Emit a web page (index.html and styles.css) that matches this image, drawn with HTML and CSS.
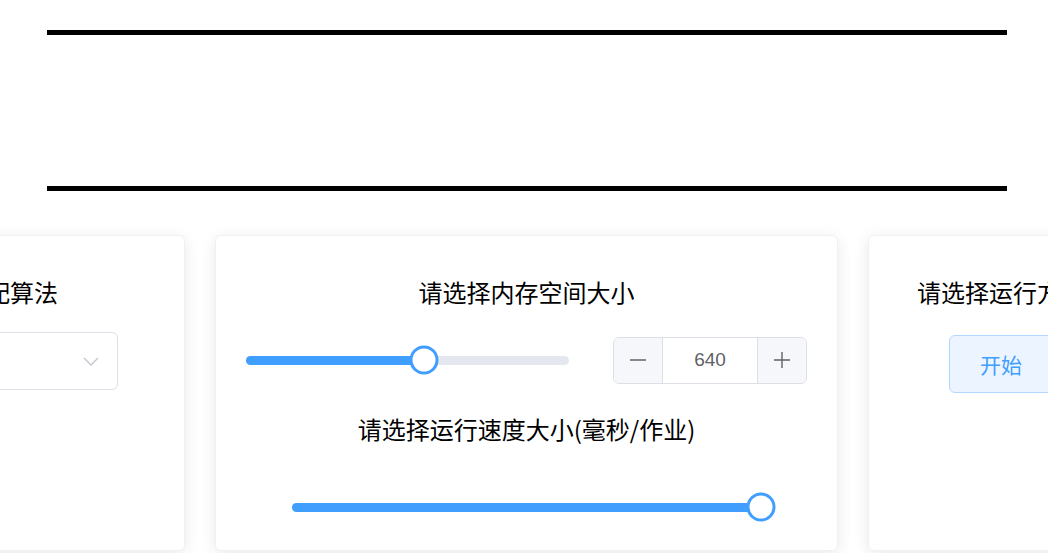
FILE: index.html
```html
<!DOCTYPE html>
<html lang="zh-CN">
<head>
<meta charset="utf-8">
<title>内存分配</title>
<link rel="stylesheet" href="styles.css">
</head>
<body>
<div class="page">
  <div class="canvas-box"></div>
  <div class="cards">
    <section class="card card-algo">
      <h2 class="card-title">请选择内存分配算法</h2>
      <div class="select">
        <span class="select-value"></span>
        <svg class="chevron" width="16" height="9" viewBox="0 0 16 9"><path d="M1 1 L8 8 L15 1" fill="none" stroke="#c0c4cc" stroke-width="1.3"/></svg>
      </div>
    </section>
    <section class="card card-mem">
      <h2 class="card-title">请选择内存空间大小</h2>
      <div class="mem-row">
        <div class="slider slider-mem">
          <div class="slider-fill" style="width:55%"></div>
          <div class="slider-knob" style="left:55%"></div>
        </div>
        <div class="num-input">
          <span class="num-btn">
            <svg width="16" height="16" viewBox="0 0 16 16"><path d="M0 8 H16" stroke="#606266" stroke-width="1.4"/></svg>
          </span>
          <span class="num-value">640</span>
          <span class="num-btn">
            <svg width="16" height="16" viewBox="0 0 16 16"><path d="M0 8 H16 M8 0 V16" stroke="#606266" stroke-width="1.4"/></svg>
          </span>
        </div>
      </div>
      <h2 class="card-title title-speed">请选择运行速度大小(毫秒/作业)</h2>
      <div class="speed-row">
        <div class="slider slider-speed">
          <div class="slider-fill" style="width:100%"></div>
          <div class="slider-knob" style="left:100%"></div>
        </div>
      </div>
    </section>
    <section class="card card-run">
      <h2 class="card-title">请选择运行方式</h2>
      <button class="btn-start" type="button">开始</button>
    </section>
  </div>
</div>
</body>
</html>
```

FILE: styles.css
```css
html, body {
  margin: 0;
  padding: 0;
  background: #fff;
  overflow: hidden;
}

body {
  font-family: "Noto Sans CJK SC", "Noto Sans", sans-serif;
  color: #000;
}

.page {
  width: 1048px;
  height: 553px;
  overflow: hidden;
}

.canvas-box {
  width: 960px;
  height: 151px;
  margin: 30px 0 0 47px;
  border-top: 5px solid #000;
  border-bottom: 5px solid #000;
}

.cards {
  display: flex;
  gap: 30px;
  margin-top: 44px;
  margin-left: -285px;
}

.card {
  flex-shrink: 0;
  box-sizing: border-box;
  height: 316px;
  padding: 38px 30px 24px;
  background: #fff;
  border: 1px solid #f0f1f4;
  border-radius: 6px;
  box-shadow: 0 3px 16px rgba(0, 0, 0, 0.09);
  display: flex;
  flex-direction: column;
  align-items: center;
}

.card-algo { width: 470px; }
.card-mem { width: 623px; align-items: stretch; }
.card-run { width: 266px; }

.card-title {
  margin: 0;
  font-size: 24px;
  font-weight: 400;
  line-height: 36px;
  height: 36px;
  text-align: center;
  white-space: nowrap;
  color: #000;
}

/* select */
.select {
  margin-top: 22px;
  box-sizing: border-box;
  width: 336px;
  height: 58px;
  border: 1.5px solid #dcdfe6;
  border-radius: 6px;
  display: flex;
  align-items: center;
  justify-content: space-between;
  padding: 0 18px 0 22px;
}

.chevron { display: block; }

/* memory row */
.mem-row {
  margin-top: 27px;
  height: 46px;
  display: flex;
  align-items: center;
  justify-content: space-between;
}

.slider {
  position: relative;
  height: 9px;
  border-radius: 5px;
  background: #e4e7ed;
}

.slider-fill {
  height: 100%;
  border-radius: 5px;
  background: #409eff;
}

.slider-knob {
  position: absolute;
  top: 50%;
  width: 29px;
  height: 29px;
  box-sizing: border-box;
  border: 3px solid #409eff;
  border-radius: 50%;
  background: #fff;
  transform: translate(-50%, -50%);
}

.slider-mem { width: 323px; }

.num-input {
  box-sizing: border-box;
  width: 194px;
  height: 47px;
  border: 1.5px solid #dcdfe6;
  border-radius: 6px;
  display: flex;
  overflow: hidden;
}

.num-btn {
  width: 48px;
  flex-shrink: 0;
  background: #f5f7fa;
  display: flex;
  align-items: center;
  justify-content: center;
}

.num-btn:first-child { border-right: 1.5px solid #dcdfe6; }
.num-btn:last-child { border-left: 1.5px solid #dcdfe6; }

.num-value {
  flex: 1;
  display: flex;
  align-items: center;
  justify-content: center;
  font-family: "Liberation Sans", Arial, sans-serif;
  font-size: 19px;
  color: #606266;
}

.title-speed { margin-top: 28px; }

.speed-row {
  margin-top: 42px;
  height: 36px;
  display: flex;
  align-items: center;
  justify-content: center;
}

.slider-speed { width: 469px; }

/* start button */
.btn-start {
  margin-top: 25px;
  box-sizing: border-box;
  height: 58px;
  padding: 0 30px;
  font-family: "Noto Sans CJK SC", sans-serif;
  font-size: 21px;
  color: #409eff;
  background: #ecf5ff;
  border: 1.5px solid #b3d8ff;
  border-radius: 6px;
}
```
